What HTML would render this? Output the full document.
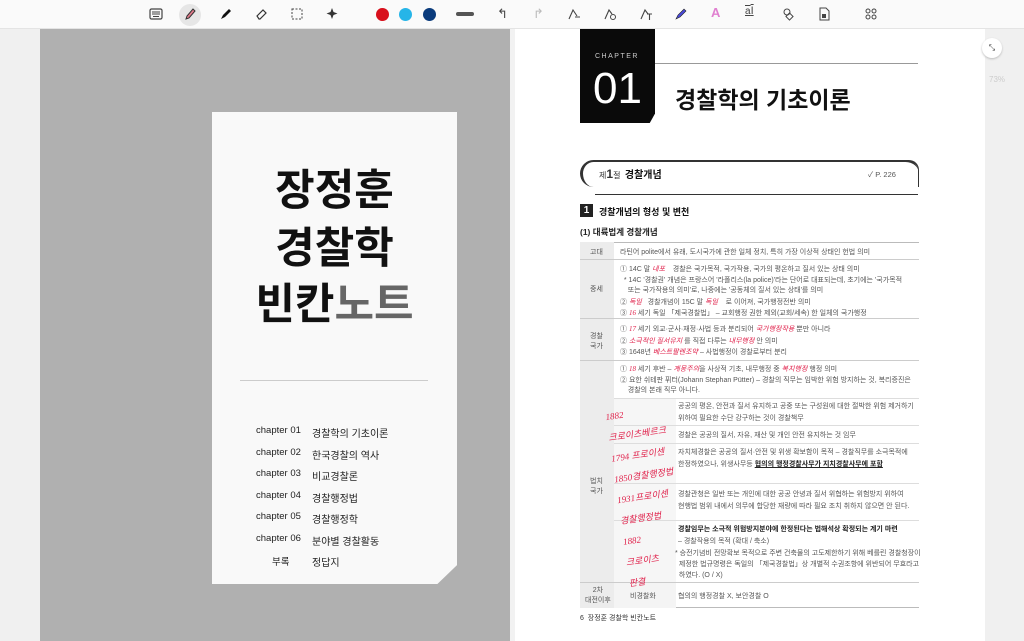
<!DOCTYPE html>
<html><head><meta charset="utf-8"><style>
*{margin:0;padding:0;box-sizing:border-box}
body{width:1024px;height:641px;overflow:hidden;background:#f2f2f2;font-family:"Liberation Sans","Noto Sans CJK KR",sans-serif;position:relative}
.tb{position:absolute;left:0;top:0;width:1024px;height:29px;background:#fafafa;border-bottom:1px solid #e4e4e4}
.ic{position:absolute;top:7px;width:14px;height:14px}
.dot{position:absolute;top:8px;width:13px;height:13px;border-radius:50%}
.left{position:absolute;left:40px;top:29px;width:470px;height:612px;background:#b0b0b0}
.card{position:absolute;left:212px;top:112px;width:245px;height:472px;background:#f9f9f9;clip-path:polygon(0 0,100% 0,100% 96%,92% 100%,0 100%)}
.title{position:absolute;left:0;width:245px;text-align:center;font-size:43px;font-weight:bold;color:#111;line-height:1}
.ch{position:absolute;left:44px;font-size:9.5px;color:#222}
.ch b{font-weight:normal;position:absolute;left:56px;white-space:nowrap;font-size:10px}
.right{position:absolute;left:515px;top:29px;width:470px;height:612px;background:#fff}
.abs{position:absolute}
.t{position:absolute;font-size:7px;color:#555;white-space:nowrap}
.hl{color:#e0204a;font-family:"Liberation Serif",serif;font-style:italic}
</style></head><body>
<div class="tb">
<svg class="ic" style="left:149px" viewBox="0 0 14 14"><rect x="1" y="2" width="12" height="10" rx="1.5" fill="none" stroke="#444" stroke-width="1.2"/><path d="M3 5h8M3 7h8M4 9.5h6" stroke="#444" stroke-width="1"/></svg>
<div style="position:absolute;left:179px;top:4px;width:22px;height:22px;border-radius:50%;background:#e6e6e6"></div>
<svg class="ic" style="left:183px" viewBox="0 0 14 14"><path d="M3 12l1-3 6-7 2 2-6 7z" fill="#e07a8a" stroke="#333" stroke-width="1"/></svg>
<svg class="ic" style="left:219px" viewBox="0 0 14 14"><path d="M2 12l2-4 6-6 2 2-6 6z" fill="#111"/></svg>
<svg class="ic" style="left:254px" viewBox="0 0 14 14"><path d="M3 9l6-6 3 3-6 6H5z" fill="none" stroke="#333" stroke-width="1.2"/></svg>
<svg class="ic" style="left:290px" viewBox="0 0 14 14"><rect x="2" y="2" width="10" height="10" fill="none" stroke="#444" stroke-dasharray="2 1.5"/></svg>
<svg class="ic" style="left:325px" viewBox="0 0 14 14"><path d="M7 1l1.5 4 4 1.5-4 1.5L7 12 5.5 8 1.5 6.5l4-1.5z" fill="#333"/></svg>
<div class="dot" style="left:376px;background:#d8101c"></div>
<div class="dot" style="left:399px;background:#26b5e8"></div>
<div class="dot" style="left:423px;background:#0a3b7c"></div>
<div style="position:absolute;left:456px;top:12px;width:18px;height:4px;border-radius:2px;background:#555"></div>
<div class="abs" style="left:497px;top:6px;font-size:13px;color:#444">↰</div>
<div class="abs" style="left:533px;top:6px;font-size:13px;color:#bbb">↱</div>
<svg class="ic" style="left:567px" viewBox="0 0 14 14"><path d="M2 12L6 3l4 6M8 10h5" fill="none" stroke="#444" stroke-width="1.1"/></svg>
<svg class="ic" style="left:603px" viewBox="0 0 14 14"><path d="M2 12L6 3l3 4" fill="none" stroke="#444" stroke-width="1.1"/><circle cx="10" cy="10" r="2.5" fill="none" stroke="#444"/></svg>
<svg class="ic" style="left:639px" viewBox="0 0 14 14"><path d="M2 12L6 3l3 4M8 7h5M10.5 7v6" fill="none" stroke="#444" stroke-width="1.1"/></svg>
<svg class="ic" style="left:674px" viewBox="0 0 14 14"><path d="M2 12l2-4 6-6 2 2-6 6z" fill="#4a4ad8" stroke="#222" stroke-width=".6"/></svg>
<div class="abs" style="left:711px;top:5px;font-size:13px;color:#e080d0;font-weight:bold">A</div>
<div class="abs" style="left:745px;top:5px;font-size:10px;color:#444;text-decoration:underline overline">a<span style="font-size:11px">I</span></div>
<svg class="ic" style="left:781px" viewBox="0 0 14 14"><circle cx="6" cy="5" r="3" fill="none" stroke="#444"/><rect x="6" y="7" width="5" height="5" fill="none" stroke="#444" transform="rotate(45 8.5 9.5)"/></svg>
<svg class="ic" style="left:817px" viewBox="0 0 14 14"><path d="M3 1h6l3 3v9H3z" fill="none" stroke="#444"/><rect x="5" y="7" width="4" height="4" fill="#444"/></svg>
<svg class="ic" style="left:864px" viewBox="0 0 14 14"><circle cx="4" cy="4" r="2" fill="none" stroke="#444"/><circle cx="10" cy="4" r="2" fill="none" stroke="#444"/><circle cx="4" cy="10" r="2" fill="none" stroke="#444"/><circle cx="10" cy="10" r="2" fill="none" stroke="#444"/></svg>
</div>
<div style="position:absolute;left:0;top:29px;width:40px;height:612px;background:#f0f0f0"></div>
<div class="left"></div>
<div class="card">
<div class="title" style="top:58px">장정훈</div>
<div class="title" style="top:116px">경찰학</div>
<div class="title" style="top:172px">빈칸<span style="color:#666">노트</span></div>
<div style="position:absolute;left:28px;top:268px;width:188px;height:1px;background:#ccc"></div>
<div class="ch" style="top:313px">chapter 01<b>경찰학의 기초이론</b></div>
<div class="ch" style="top:335px">chapter 02<b>한국경찰의 역사</b></div>
<div class="ch" style="top:356px">chapter 03<b>비교경찰론</b></div>
<div class="ch" style="top:378px">chapter 04<b>경찰행정법</b></div>
<div class="ch" style="top:399px">chapter 05<b>경찰행정학</b></div>
<div class="ch" style="top:421px">chapter 06<b>분야별 경찰활동</b></div>
<div class="ch" style="top:442px;left:60px">부록<b style="left:40px">정답지</b></div>
</div>
<div class="right">
<div class="abs" style="left:65px;top:0;width:75px;height:94px;background:#0a0a0a;clip-path:polygon(0 0,100% 0,100% 90%,93% 100%,0 100%)">
<div class="abs" style="left:15px;top:24px;font-size:7px;color:#ccc;letter-spacing:1.5px">CHAPTER</div>
<div class="abs" style="left:13px;top:38px;font-size:44px;color:#fff;line-height:1">01</div>
</div>
<div class="abs" style="left:140px;top:34px;width:263px;height:1px;background:#999"></div>
<div class="abs" style="left:160px;top:52px;font-size:23px;font-weight:bold;color:#111">경찰학의 기초이론</div>
<div class="abs" style="left:65px;top:131px;width:339px;height:27px;border:2px solid #333;border-right:none;border-bottom:none;border-radius:14px 14px 0 14px;border-left:3px solid #333"></div>
<div class="abs" style="left:387px;top:131px;width:17px;height:27px;border-top:2px solid #333;border-right:1px solid #333;border-top-right-radius:10px"></div>
<div class="abs" style="left:80px;top:165px;width:323px;height:1px;background:#333"></div>
<div class="t" style="left:84px;top:137px;font-size:8px;color:#333">제<b style="font-size:12px">1</b>절 &nbsp;<b style="font-size:10px;color:#111">경찰개념</b></div>
<div class="t" style="left:353px;top:140px;font-size:7.5px">✓ P. 226</div>
<div class="abs" style="left:65px;top:175px;width:13px;height:13px;background:#222;color:#fff;font-size:10px;font-weight:bold;text-align:center;line-height:13px">1</div>
<div class="t" style="left:84px;top:176px;font-size:9px;color:#111;font-weight:bold">경찰개념의 형성 및 변천</div>
<div class="t" style="left:65px;top:197px;font-size:8.5px;color:#222;font-weight:bold">(1) 대륙법계 경찰개념</div>
<div class="abs" style="left:65px;top:213px;width:339px;height:366px;border-top:1px solid #bbb;border-bottom:1px solid #bbb"></div>
<div class="abs" style="left:65px;top:213px;width:34px;height:366px;background:#ececec"></div>
<div class="abs" style="left:99px;top:369px;width:62px;height:184px;background:#f6f6f6"></div>
<div class="abs" style="left:99px;top:553px;width:62px;height:26px;background:#f4f4f4"></div>
<div class="abs" style="left:65px;top:230px;width:339px;height:1px;background:#ccc"></div>
<div class="abs" style="left:65px;top:289px;width:339px;height:1px;background:#ccc"></div>
<div class="abs" style="left:65px;top:331px;width:339px;height:1px;background:#ccc"></div>
<div class="abs" style="left:65px;top:553px;width:339px;height:1px;background:#ccc"></div>
<div class="abs" style="left:99px;top:369px;width:305px;height:1px;background:#ddd"></div>
<div class="abs" style="left:99px;top:396px;width:305px;height:1px;background:#ddd"></div>
<div class="abs" style="left:99px;top:414px;width:305px;height:1px;background:#ddd"></div>
<div class="abs" style="left:99px;top:454px;width:305px;height:1px;background:#ddd"></div>
<div class="abs" style="left:99px;top:491px;width:305px;height:1px;background:#ddd"></div>
<div class="t" style="left:75px;top:218px">고대</div>
<div class="t" style="left:75px;top:255px">중세</div>
<div class="t" style="left:75px;top:303px;line-height:10px;text-align:center">경찰<br>국가</div>
<div class="t" style="left:75px;top:448px;line-height:10px;text-align:center">법치<br>국가</div>
<div class="t" style="left:70px;top:557px;line-height:10px;text-align:center">2차<br>대전이후</div>
<div class="t" style="left:115px;top:562px">비경찰화</div>
<div class="t" style="left:105px;top:218px">라틴어 polite에서 유래, 도시국가에 관한 일체 정치, 특히 가장 이상적 상태인 헌법 의미</div>
<div class="t" style="left:105px;top:235px;line-height:10.5px">① 14C 말 <span class="hl">내포</span> &nbsp;&nbsp; 경찰은 국가목적, 국가작용, 국가의 평온하고 질서 있는 상태 의미<br>&nbsp;&nbsp;* 14C '경찰권' 개념은 프랑스어 '라폴리스(la police)'라는 단어로 대표되는데, 초기에는 '국가목적<br>&nbsp;&nbsp;&nbsp;&nbsp;또는 국가작용의 의미'로, 나중에는 '공동체의 질서 있는 상태'를 의미<br>② <span class="hl">독일</span> &nbsp; 경찰개념이 15C 말 <span class="hl">독일</span> &nbsp;&nbsp; 로 이어져, 국가행정전반 의미<br>③ <span class="hl">16</span> 세기 독일 「제국경찰법」 – 교회행정 권한 제외(교회/세속) 한 일체의 국가행정</div>
<div class="t" style="left:105px;top:295px;line-height:10.5px">① <span class="hl">17</span> 세기 외교·군사·재정·사법 등과 분리되어 <span class="hl">국가행정작용</span> 뿐만 아니라<br>② <span class="hl">소극적인 질서유지</span> 를 직접 다루는 <span class="hl">내무행정</span> 안 의미<br>③ 1648년 <span class="hl">베스트팔렌조약</span> – 사법행정이 경찰로부터 분리</div>
<div class="t" style="left:105px;top:335px;line-height:10.5px">① <span class="hl">18</span> 세기 후반 – <span class="hl">계몽주의</span>을 사상적 기초, 내무행정 중 <span class="hl">복지행정</span> 행정 의미<br>② 요한 쉬테판 퓌터(Johann Stephan Pütter) – 경찰의 직무는 임박한 위험 방지하는 것, 복리증진은<br>&nbsp;&nbsp;&nbsp;&nbsp;경찰의 본래 직무 아니다.</div>
<div class="t" style="left:163px;top:372px;line-height:12px">공공의 평온, 안전과 질서 유지하고 공중 또는 구성원에 대한 절박한 위험 제거하기<br>위하여 필요한 수단 강구하는 것이 경찰책무</div>
<div class="t" style="left:163px;top:401px">경찰은 공공의 질서, 자유, 재산 및 개인 안전 유지하는 것 임무</div>
<div class="t" style="left:163px;top:418px;line-height:12px">자치체경찰은 공공의 질서·안전 및 위생 확보함이 목적 – 경찰직무를 소극목적에<br>한정하였으나, 위생사무등 <b style="color:#222;text-decoration:underline">협의의 행정경찰사무가 지치경찰사무에 포함</b></div>
<div class="t" style="left:163px;top:460px;line-height:12px">경찰관청은 일반 또는 개인에 대한 공공 안녕과 질서 위협하는 위험방지 위하여<br>현행법 범위 내에서 의무에 합당한 재량에 따라 필요 조치 취하지 않으면 안 된다.</div>
<div class="t" style="left:163px;top:495px;line-height:12px"><b style="color:#222">경찰임무는 소극적 위험방지분야에 한정된다는 법해석상 확정되는 계기 마련</b><br>– 경찰작용의 목적 (확대 / 축소)</div>
<div class="t" style="left:160px;top:519px;line-height:11px">* 승전기념비 전망확보 목적으로 주변 건축물의 고도제한하기 위해 베를린 경찰청장이<br>&nbsp;&nbsp;제정한 법규명령은 독일의 「제국경찰법」상 개별적 수권조항에 위반되어 무효라고<br>&nbsp;&nbsp;하였다. (O / X)</div>
<div class="t" style="left:163px;top:562px">협의의 행정경찰 X, 보안경찰 O</div>
<div class="abs hl" style="left:102px;top:373px;font-size:9px;line-height:21px;width:62px;transform:rotate(-8deg)">1882<br>크로이츠베르크<br>1794 프로이센<br>1850경찰행정법<br>1931프로이센<br>경찰행정법<br>1882<br>크로이츠<br>판결</div>
<div class="t" style="left:65px;top:584px;font-size:7px;color:#333">6 &nbsp;장정훈 경찰학 빈칸노트</div>
</div>
<div style="position:absolute;left:985px;top:29px;width:39px;height:612px;background:#f0f0f0"></div>
<div style="position:absolute;left:982px;top:38px;width:20px;height:20px;border-radius:50%;background:#fff;box-shadow:0 1px 2px #bbb;font-size:8px;text-align:center;line-height:20px;color:#333">⤡</div>
<div style="position:absolute;left:989px;top:75px;font-size:8px;color:#ccc">73%</div>
</body></html>
